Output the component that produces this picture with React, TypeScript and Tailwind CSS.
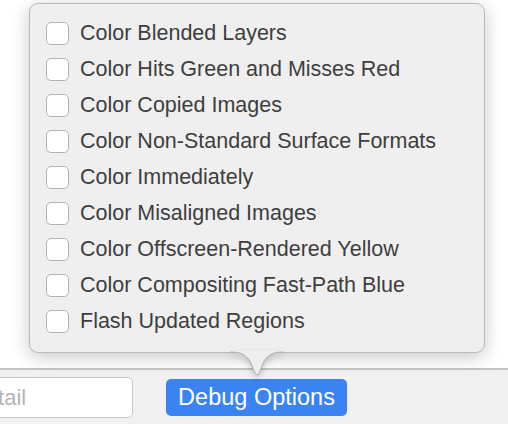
import React from "react";

const items = [
  "Color Blended Layers",
  "Color Hits Green and Misses Red",
  "Color Copied Images",
  "Color Non-Standard Surface Formats",
  "Color Immediately",
  "Color Misaligned Images",
  "Color Offscreen-Rendered Yellow",
  "Color Compositing Fast-Path Blue",
  "Flash Updated Regions",
];

export default function App() {
  return (
    <div
      className="relative w-[508px] h-[424px] overflow-hidden bg-white flex flex-col"
      style={{ fontFamily: '"Liberation Sans", Arial, sans-serif' }}
    >
      <div className="h-[368px] bg-white" />
      <div className="flex-1 bg-[#f1f1f1] border-t-2 border-[#c4c4c4] flex items-center gap-[33px] pt-[1px]">
        <div className="w-[172px] -ml-[39px] h-[41px] bg-white border border-[#c9c9c9] rounded-[5px] flex items-center pl-[8px] text-[22px] text-[#b4b4b4] whitespace-nowrap">
          Detail
        </div>
        <div className="h-[37px] w-[181px] bg-[#3b83f1] rounded-[5px] flex items-center justify-center text-white text-[23.5px]">
          Debug Options
        </div>
      </div>

      <div className="absolute left-[29px] top-[3px] w-[456px] h-[350px] bg-[#efefef] border border-[#b9b9b9] rounded-[9px] shadow-[0_4px_18px_rgba(0,0,0,0.22)]">
        <div className="flex flex-col pt-[11px] pl-[16px]">
          {items.map((t) => (
            <div key={t} className="h-[36px] flex items-center gap-[11px]">
              <div className="w-[23px] h-[23px] bg-white border border-[#b3b3b3] rounded-[5px] shrink-0" />
              <span className="text-[21.5px] text-[#3e3e3e] whitespace-nowrap">{t}</span>
            </div>
          ))}
        </div>
        <svg
          className="absolute left-[200px] top-[347px]"
          width="54"
          height="28"
          viewBox="0 0 54 28"
          style={{ filter: "drop-shadow(0 3px 3px rgba(0,0,0,0.2))" }}
        >
          <path
            d="M0 1 C11 1 15 3 20 10 L25 22 Q27 25.5 29 22 L34 10 C39 3 43 1 54 1 L54 0 L0 0 Z"
            fill="#efefef"
          />
          <path
            d="M0 1 C11 1 15 3 20 10 L25 22 Q27 25.5 29 22 L34 10 C39 3 43 1 54 1"
            fill="none"
            stroke="#b0b0b0"
            strokeWidth="1"
          />
        </svg>
      </div>
    </div>
  );
}
